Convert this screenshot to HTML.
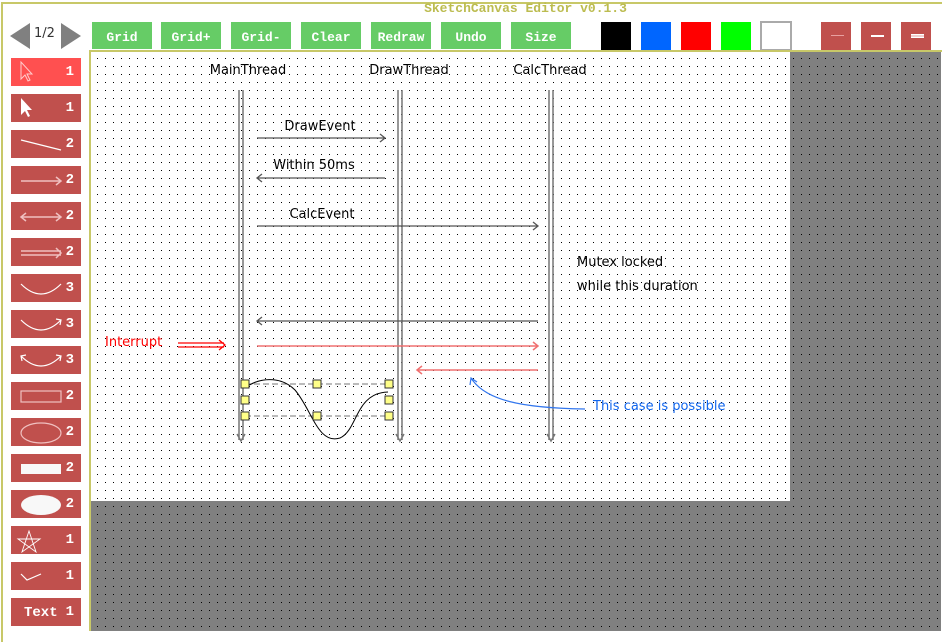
<!DOCTYPE html>
<html><head><meta charset="utf-8"><style>
*{margin:0;padding:0;box-sizing:border-box}
body{width:951px;height:631px;overflow:hidden;background:#fff;position:relative;font-family:"Liberation Mono",monospace}
.frame{position:absolute;left:1px;top:2px;width:941px;height:640px;border-left:2px solid #c8c868;border-top:2px solid #c8c868}
.title{position:absolute;left:0;width:1051px;top:2px;text-align:center;font-size:13px;font-weight:bold;color:#bcbc50;line-height:13px;z-index:5}
.tb{position:absolute;top:22px;height:27px;width:60px;background:#66cc66;color:#fff;font-weight:bold;font-size:13px;text-align:center;line-height:31px}
.sw{position:absolute;top:22px;width:30px;height:28px}
.rb{position:absolute;top:22px;width:30px;height:28px;background:#c0504d}
.rb i{position:absolute;left:10px;top:13px;width:13px;height:2px;background:#fff}
.lb{position:absolute;left:11px;width:70px;height:28px;background:#c0504d;color:#fff;font-weight:bold;font-size:14px}
.lb b{position:absolute;right:7px;top:6px}
.lb svg{position:absolute;left:0;top:0}
.canvas{position:absolute;left:91px;top:52px;width:850px;height:579px;background:#808080}
.white{position:absolute;left:91px;top:52px;width:699px;height:449px;background:#fff}
.vline{position:absolute;left:89px;top:52px;width:2px;height:579px;background:#c8c868}
.hline{position:absolute;left:89px;top:50px;width:853px;height:2px;background:#c8c868}
svg text{font-family:"DejaVu Sans",sans-serif;font-size:13px}
</style></head><body>
<div class="frame"></div>
<div class="title">SketchCanvas Editor v0.1.3</div>
<svg style="position:absolute;left:10px;top:22px" width="72" height="28"><polygon points="0,14 20,1 20,27" fill="#808080"/><polygon points="61,1 81,14 61,27" fill="#808080" transform="translate(-10,0)"/><text x="24" y="15" font-family="Liberation Mono" font-size="13" fill="#333">1/2</text></svg>
<div class="tb" style="left:92px">Grid</div>
<div class="tb" style="left:161px">Grid+</div>
<div class="tb" style="left:231px">Grid-</div>
<div class="tb" style="left:301px">Clear</div>
<div class="tb" style="left:371px">Redraw</div>
<div class="tb" style="left:441px">Undo</div>
<div class="tb" style="left:511px">Size</div>
<div class="sw" style="left:601px;background:#000"></div>
<div class="sw" style="left:641px;background:#0066ff"></div>
<div class="sw" style="left:681px;background:#f00"></div>
<div class="sw" style="left:721px;background:#0f0"></div>
<div class="sw" style="left:760px;top:21px;width:32px;height:30px;border:2px solid #aaa;background:#fff"></div>
<div class="rb" style="left:821px"><i style="height:1px;background:#e8a0a0"></i></div>
<div class="rb" style="left:861px"><i></i></div>
<div class="rb" style="left:901px"><i style="height:4px;top:12px;border-top:1px solid #fff;border-bottom:1px solid #fff;background:#f0d0d0"></i></div>

<div class="lb" style="top:58px;background:#ff5050"><svg width="70" height="28"><path d="M10,4 L10,21 L14,17 L17,23 L19,22 L16,16 L21,16 Z" fill="none" stroke="#fcc" stroke-width="1"/></svg><b>1</b></div>
<div class="lb" style="top:94px"><svg width="70" height="28"><path d="M10,4 L10,21 L14,17 L17,23 L19,22 L16,16 L21,16 Z" fill="#fff"/></svg><b>1</b></div>
<div class="lb" style="top:130px"><svg width="70" height="28"><line x1="10" y1="10" x2="50" y2="20" stroke="#fff" stroke-width="1.2"/></svg><b>2</b></div>
<div class="lb" style="top:166px"><svg width="70" height="28"><path d="M10,15 H50 M45,11 L50,15 L45,19" stroke="#f0c0c0" fill="none" stroke-width="1.5"/></svg><b>2</b></div>
<div class="lb" style="top:202px"><svg width="70" height="28"><path d="M10,15 H50 M45,11 L50,15 L45,19 M15,11 L10,15 L15,19" stroke="#f0c0c0" fill="none" stroke-width="1.5"/></svg><b>2</b></div>
<div class="lb" style="top:238px"><svg width="70" height="28"><path d="M10,13 H50 M10,17 H50 M45,10 L50,15 L45,20" stroke="#f0c0c0" fill="none" stroke-width="1.5"/></svg><b>2</b></div>
<div class="lb" style="top:274px"><svg width="70" height="28"><path d="M10,10 Q30,30 50,10" stroke="#fff" fill="none" stroke-width="1.2"/></svg><b>3</b></div>
<div class="lb" style="top:310px"><svg width="70" height="28"><path d="M10,10 Q30,30 50,10 M45,9 L50,10 L49,15" stroke="#fff" fill="none" stroke-width="1.2"/></svg><b>3</b></div>
<div class="lb" style="top:346px"><svg width="70" height="28"><path d="M10,10 Q30,30 50,10 M45,9 L50,10 L49,15 M15,9 L10,10 L11,15" stroke="#fff" fill="none" stroke-width="1.2"/></svg><b>3</b></div>
<div class="lb" style="top:382px"><svg width="70" height="28"><rect x="10" y="9" width="40" height="11" stroke="#f0c0c0" fill="none" stroke-width="1.2"/></svg><b>2</b></div>
<div class="lb" style="top:418px"><svg width="70" height="28"><ellipse cx="30" cy="15" rx="20" ry="10" stroke="#f0c0c0" fill="none" stroke-width="1.2"/></svg><b>2</b></div>
<div class="lb" style="top:454px"><svg width="70" height="28"><rect x="10" y="10" width="40" height="10" fill="#f8f8f8"/></svg><b>2</b></div>
<div class="lb" style="top:490px"><svg width="70" height="28"><ellipse cx="30" cy="15" rx="20" ry="10" fill="#f8f8f8"/></svg><b>2</b></div>
<div class="lb" style="top:526px"><svg width="70" height="28"><path d="M18,5 L25,26 L7,13 L29,13 L11,26 Z" stroke="#fff" fill="none" stroke-width="0.9"/></svg><b>1</b></div>
<div class="lb" style="top:562px"><svg width="70" height="28"><path d="M10,12 L16,18 L30,12" stroke="#fff" fill="none" stroke-width="1.2"/></svg><b>1</b></div>
<div class="lb" style="top:598px"><span style="position:absolute;left:13px;top:7px">Text</span><b>1</b></div>

<div class="canvas"></div>
<div class="white"></div>
<svg style="position:absolute;left:91px;top:52px" width="850" height="579">
<defs><pattern id="d" x="6" y="6" width="8" height="8" patternUnits="userSpaceOnUse"><rect width="1" height="1" fill="#000"/></pattern></defs>
<rect width="850" height="579" fill="url(#d)"/></svg>
<div class="vline"></div>
<div class="hline"></div>

<svg style="position:absolute;left:0;top:0" width="951" height="631">
<g fill="#000"><text x="248" y="74" text-anchor="middle">MainThread</text><text x="409" y="74" text-anchor="middle">DrawThread</text><text x="550" y="74" text-anchor="middle">CalcThread</text></g>
<g stroke="#777" stroke-width="1.5" fill="none">
<path d="M239,90 V440 M243,90 V440 M237,434 L241,441 L245,434"/>
<path d="M398,90 V440 M402,90 V440 M396,434 L400,441 L404,434"/>
<path d="M549,90 V440 M553,90 V440 M547,434 L551,441 L555,434"/>
</g>
<g stroke="#555" stroke-width="1.3" fill="none">
<path d="M257,138 H385 M380,134 L385,138 L380,142"/>
<path d="M385,178 H257 M262,174 L257,178 L262,182"/>
<path d="M257,226 H538 M533,222 L538,226 L533,230"/>
<path d="M538,321 H257 M262,317 L257,321 L262,325"/>
</g>
<g fill="#000"><text x="320" y="130" text-anchor="middle">DrawEvent</text><text x="314" y="169" text-anchor="middle">Within 50ms</text><text x="322" y="218" text-anchor="middle">CalcEvent</text>
<text x="577" y="266">Mutex locked</text><text x="577" y="290">while this duration</text></g>
<g stroke="#f07070" stroke-width="1.5" fill="none">
<path d="M257,346 H538 M533,342 L538,346 L533,350"/>
<path d="M538,370 H417 M422,366 L417,370 L422,374"/>
</g>
<text x="105" y="346" fill="#f00">Interrupt</text>
<path d="M178,343 H224 M178,347 H224 M219,340 L225,345 L219,350" stroke="#f00" stroke-width="1.3" fill="none"/>
<path d="M585,409 C520,408 485,400 471,378 M470,385 L471,378 L477,382" stroke="#3377ee" stroke-width="1.2" fill="none"/>
<text x="593" y="410" fill="#1166ee">This case is possible</text>
<path d="M245,384 H389 M245,416 H389" stroke="#777" stroke-dasharray="6,3" fill="none"/>
<path d="M245,388 C258,378 280,375 295,390 C312,410 318,445 340,438 C358,430 355,393 388,392" stroke="#000" fill="none"/>
<g fill="#ffff88" stroke="#333">
<rect x="241" y="380" width="8" height="8"/><rect x="313" y="380" width="8" height="8"/><rect x="385" y="380" width="8" height="8"/>
<rect x="241" y="396" width="8" height="8"/><rect x="385" y="396" width="8" height="8"/>
<rect x="241" y="412" width="8" height="8"/><rect x="313" y="412" width="8" height="8"/><rect x="385" y="412" width="8" height="8"/>
</g>
</svg>
</body></html>
